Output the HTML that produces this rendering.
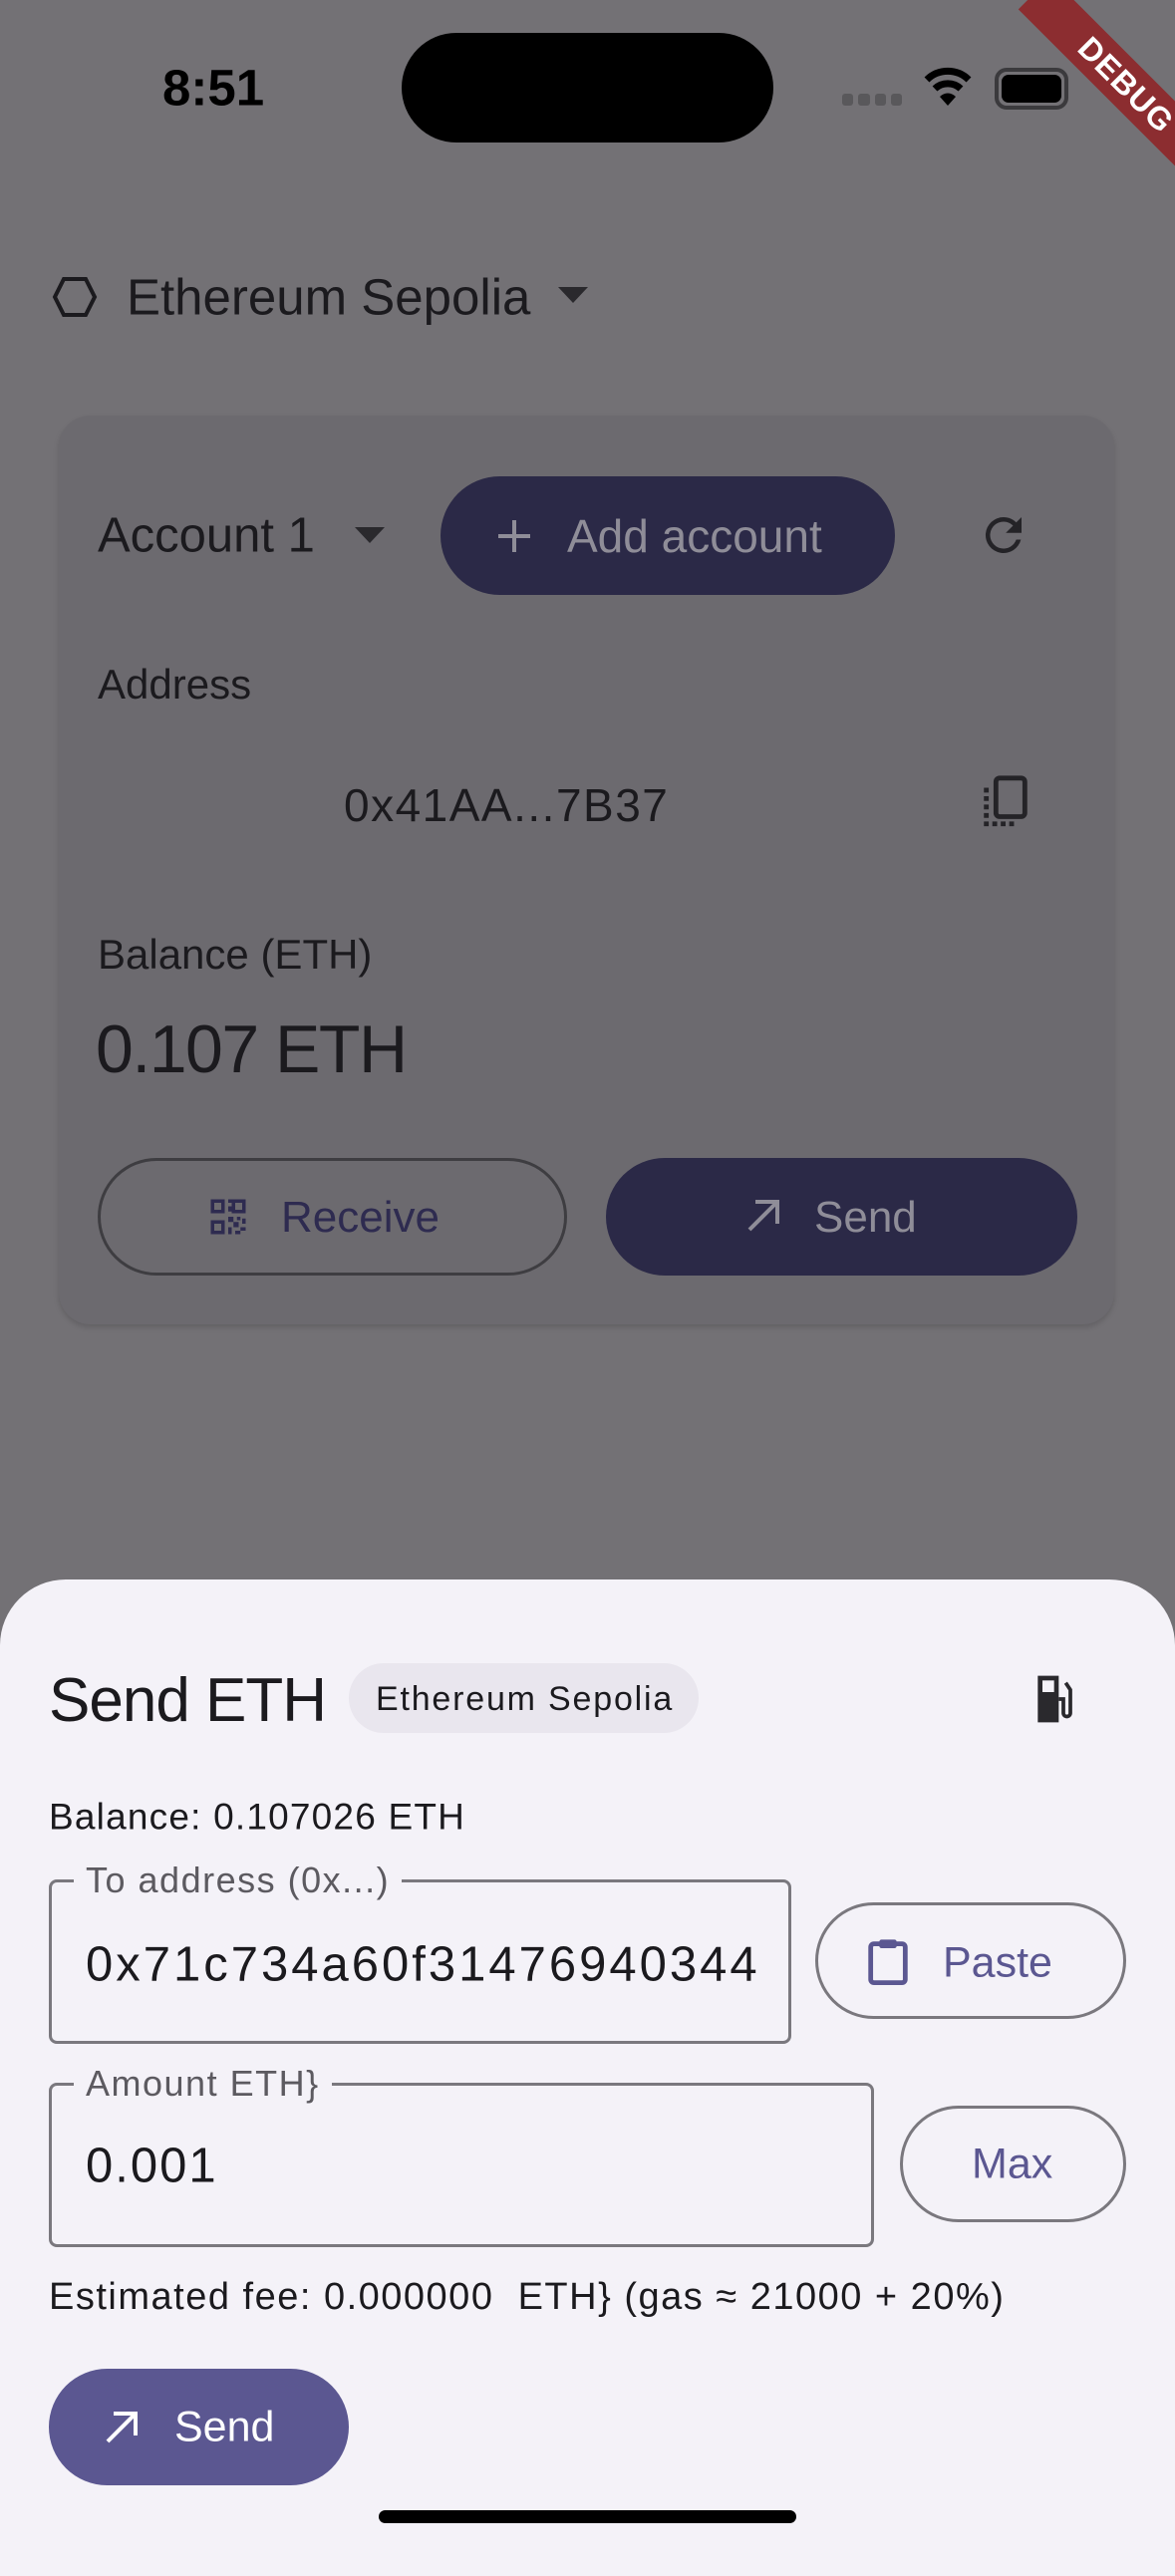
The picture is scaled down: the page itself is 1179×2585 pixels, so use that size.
<!DOCTYPE html>
<html><head><meta charset="utf-8"><style>
*{margin:0;padding:0;box-sizing:border-box}
body{width:1179px;height:2556px;background:#737175;position:relative;overflow:hidden;font-family:"Liberation Sans",sans-serif;color:#1b1a1e}
.t{position:absolute;white-space:nowrap;transform:translateY(-50%);line-height:1}
.a{position:absolute}
</style></head><body>
<!-- status bar -->
<div class="t" style="left:163px;top:88px;font-size:51px;font-weight:bold;color:#000">8:51</div>
<div class="a" style="left:403px;top:33px;width:373px;height:110px;border-radius:55px;background:#000"></div>
<div class="a" style="left:845px;top:94px;width:60px;height:12px;display:flex;gap:5px"><i style="flex:1;background:#59585b;border-radius:3px"></i><i style="flex:1;background:#59585b;border-radius:3px"></i><i style="flex:1;background:#59585b;border-radius:3px"></i><i style="flex:1;background:#59585b;border-radius:3px"></i></div>
<svg class="a" style="left:926px;top:66px" width="50" height="42" viewBox="0 0 50 42"><path d="M4 14 A30 30 0 0 1 46 14" stroke="#000" stroke-width="7" fill="none"/><path d="M12 23 A19 19 0 0 1 38 23" stroke="#000" stroke-width="7" fill="none"/><path d="M25 40 L17 31 A11 11 0 0 1 33 31 Z" fill="#000"/></svg>
<div class="a" style="left:998px;top:68px;width:74px;height:42px;border:4px solid #3b3a3d;border-radius:12px;padding:3px"><div style="width:100%;height:100%;background:#000;border-radius:7px"></div></div>
<div class="a" style="left:1000px;top:62px;width:260px;height:46px;background:#8c2d30;transform:rotate(45deg);color:#fff;font-weight:bold;font-size:32px;text-align:center;line-height:46px;letter-spacing:1px">DEBUG</div>

<!-- network -->
<svg class="a" style="left:52px;top:275px" width="46" height="46" viewBox="0 0 46 46"><path d="M12 5 H34 L43 23 L34 41 H12 L3 23 Z" fill="none" stroke="#1b1a1e" stroke-width="4"/></svg>
<div class="t" style="left:127px;top:298px;font-size:51px">Ethereum Sepolia</div>
<svg class="a" style="left:560px;top:288px" width="30" height="18"><path d="M0 0H30L15 16Z" fill="#2a292d"/></svg>

<!-- card -->
<div class="a" style="left:59px;top:417px;width:1059px;height:912px;background:#6c6a6f;border-radius:32px;box-shadow:0 3px 6px rgba(0,0,0,.15)"></div>
<div class="t" style="left:98px;top:538px;font-size:49px">Account 1</div>
<svg class="a" style="left:356px;top:529px" width="30" height="18"><path d="M0 0H30L15 16Z" fill="#2a292d"/></svg>
<div class="a" style="left:442px;top:478px;width:456px;height:119px;border-radius:60px;background:#2b2947"></div>
<svg class="a" style="left:498px;top:520px" width="36" height="36"><path d="M18 2V34M2 18H34" stroke="#8f8d98" stroke-width="4"/></svg>
<div class="t" style="left:569px;top:538px;font-size:46px;color:#8f8d98">Add account</div>
<svg class="a" style="left:980px;top:510px" width="54" height="54" viewBox="0 0 24 24"><path d="M17.65 6.35A7.96 7.96 0 0 0 12 4a8 8 0 1 0 7.73 10h-2.08A6 6 0 1 1 12 6c1.66 0 3.14.69 4.22 1.78L13 11h7V4l-2.35 2.35z" fill="#242327"/></svg>
<div class="t" style="left:98px;top:687px;font-size:42px">Address</div>
<div class="t" style="left:345px;top:808px;font-size:46px;letter-spacing:1.5px">0x41AA...7B37</div>
<svg class="a" style="left:980px;top:776px" width="58" height="58" viewBox="0 0 24 24"><rect x="8" y="2" width="12" height="16" rx="1.5" fill="none" stroke="#242327" stroke-width="2"/><path d="M4 6V21H16" fill="none" stroke="#242327" stroke-width="2" stroke-dasharray="2 1.5"/></svg>
<div class="t" style="left:98px;top:958px;font-size:42px">Balance (ETH)</div>
<div class="t" style="left:96px;top:1053px;font-size:68px;letter-spacing:-1.5px">0.107 ETH</div>
<div class="a" style="left:98px;top:1162px;width:471px;height:118px;border-radius:59px;border:3px solid #3e3d41"></div>
<svg class="a" style="left:208px;top:1200px" width="42" height="42" viewBox="0 0 24 24" fill="#2e2b50"><path d="M2 2h8v8H2zM4 4v4h4V4zM14 2h8v8h-8zM16 4v4h4V4zM2 14h8v8H2zM4 16v4h4v-4zM12 12h3v3h-3zM17 12h2v2h-2zM20 13h2v3h-2zM15 15h3v3h-3zM12 18h2v4h-2zM19 18h3v2h-3zM16 20h3v2h-3zM12 6h2v3h-2zM12 2h2v2h-2z"/></svg>
<div class="t" style="left:282px;top:1222px;font-size:44px;color:#2e2b50">Receive</div>
<div class="a" style="left:608px;top:1162px;width:473px;height:118px;border-radius:59px;background:#2b2947"></div>
<svg class="a" style="left:746px;top:1200px" width="40" height="40"><path d="M6 34L34 6M12 6H34V28" stroke="#8f8d98" stroke-width="4" fill="none"/></svg>
<div class="t" style="left:817px;top:1222px;font-size:44px;color:#8f8d98">Send</div>

<!-- sheet -->
<div class="a" style="left:0;top:1585px;width:1179px;height:1000px;background:#f4f2f8;border-radius:66px 66px 0 0"></div>
<div class="t" style="left:49px;top:1707px;font-size:62px;letter-spacing:-1px">Send ETH</div>
<div class="a" style="left:350px;top:1669px;width:351px;height:70px;border-radius:35px;background:#e9e6ee"></div>
<div class="t" style="left:377px;top:1705px;font-size:34px;letter-spacing:1.8px">Ethereum Sepolia</div>
<svg class="a" style="left:1032px;top:1676px" width="56" height="58" viewBox="0 0 24 24"><path d="M4 2h9v20H4z" fill="#2a292d"/><rect x="6" y="4" width="5" height="5" fill="#f4f2f8"/><path d="M13 12h2v6a1.5 1.5 0 0 0 3 0V8l-2-3" stroke="#2a292d" stroke-width="1.6" fill="none"/></svg>
<div class="t" style="left:49px;top:1823px;font-size:37px;letter-spacing:1.2px">Balance: 0.107026 ETH</div>

<div class="a" style="left:49px;top:1886px;width:745px;height:165px;border:3px solid #7a787e;border-radius:8px"></div>
<div class="t" style="left:74px;top:1887px;font-size:36px;color:#5c5a60;background:#f4f2f8;padding:0 12px;letter-spacing:1.5px">To address (0x...)</div>
<div class="t" style="left:86px;top:1972px;font-size:49px;letter-spacing:3px">0x71c734a60f31476940344</div>
<div class="a" style="left:818px;top:1909px;width:312px;height:117px;border-radius:59px;border:3px solid #7a787e"></div>
<svg class="a" style="left:868px;top:1942px" width="46" height="52" viewBox="0 0 20 24"><rect x="2" y="4" width="16" height="18" rx="1.5" fill="none" stroke="#5b5791" stroke-width="2.2"/><rect x="6" y="2" width="8" height="4" rx="1" fill="#5b5791"/></svg>
<div class="t" style="left:946px;top:1970px;font-size:43px;color:#5b5791">Paste</div>

<div class="a" style="left:49px;top:2090px;width:828px;height:165px;border:3px solid #7a787e;border-radius:8px"></div>
<div class="t" style="left:74px;top:2091px;font-size:36px;color:#5c5a60;background:#f4f2f8;padding:0 12px;letter-spacing:1.5px">Amount ETH}</div>
<div class="t" style="left:86px;top:2174px;font-size:49px;letter-spacing:2px">0.001</div>
<div class="a" style="left:903px;top:2113px;width:227px;height:117px;border-radius:59px;border:3px solid #7a787e"></div>
<div class="t" style="left:975px;top:2172px;font-size:43px;color:#5b5791">Max</div>

<div class="t" style="left:49px;top:2305px;font-size:38px;letter-spacing:1.5px;white-space:pre">Estimated fee: 0.000000  ETH} (gas ≈ 21000 + 20%)</div>

<div class="a" style="left:49px;top:2377px;width:301px;height:117px;border-radius:59px;background:#5b5791"></div>
<svg class="a" style="left:102px;top:2416px" width="40" height="40"><path d="M6 34L34 6M12 6H34V28" stroke="#fff" stroke-width="4" fill="none"/></svg>
<div class="t" style="left:175px;top:2436px;font-size:43px;color:#fff">Send</div>

<div class="a" style="left:380px;top:2519px;width:419px;height:13px;border-radius:7px;background:#000"></div>
</body></html>
